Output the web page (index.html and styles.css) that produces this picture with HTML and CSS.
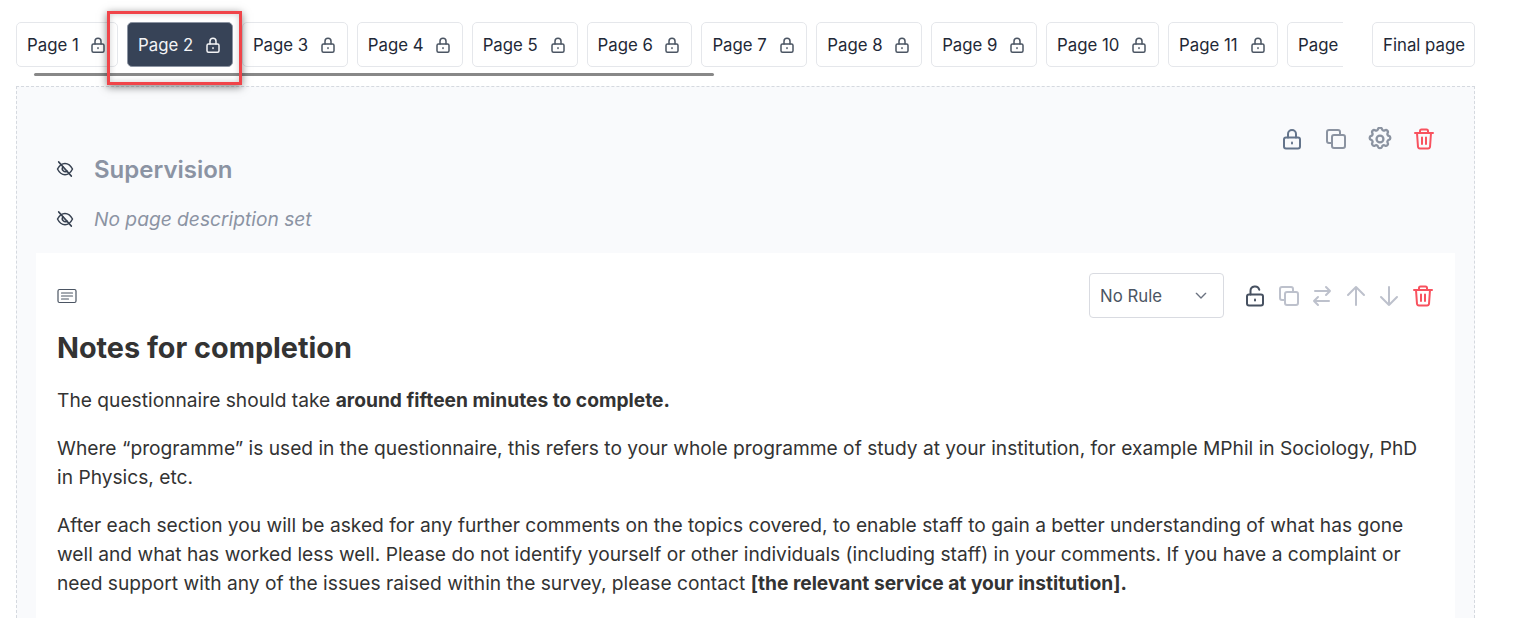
FILE: index.html
```html
<!DOCTYPE html>
<html>
<head>
    <title>Survey builder</title>
    <meta name="viewport" content="width=device-width,initial-scale=1.0">
    <link rel="stylesheet" href="styles.css">
</head>
<body>
    <svg class="defs" width="0" height="0">
        <symbol id="lock" viewBox="0 0 24 24"><path d="M8 10.500V7a4 4 0 0 1 8 0v3.500"/><rect x="4" y="10.500" width="16" height="11" rx="2"/><path d="M12 15.500v1"/></symbol>
        <symbol id="unlock" viewBox="0 0 24 24"><path d="M7.500 10.500V7a4.500 4.500 0 0 1 8.800-1.300"/><rect x="4" y="10.500" width="16" height="11" rx="2"/><path d="M12 15.500v1"/></symbol>
        <symbol id="copy" viewBox="0 0 24 24"><rect x="8" y="8" width="13" height="13" rx="2"/><path d="M16 8V5a2 2 0 0 0-2-2H5a2 2 0 0 0-2 2v9a2 2 0 0 0 2 2h3"/></symbol>
        <symbol id="trash" viewBox="0 0 24 24"><path d="M3 6h18M8 6V4a1.500 1.500 0 0 1 1.500-1.500h5A1.500 1.500 0 0 1 16 4v2M5 6l1 14a2 2 0 0 0 2 1.500h8a2 2 0 0 0 2-1.500l1-14M10 10.500v6.500M14 10.500v6.500"/></symbol>
        <symbol id="gear" viewBox="1.500 1.500 21 21"><path d="M10.300 3.300c.4-1.700 3-1.700 3.400 0a1.700 1.700 0 0 0 2.600 1.100c1.500-.9 3.300.8 2.400 2.400a1.700 1.700 0 0 0 1 2.500c1.800.5 1.800 3 0 3.500a1.700 1.700 0 0 0-1 2.500c.9 1.600-.9 3.300-2.400 2.400a1.700 1.700 0 0 0-2.600 1.100c-.4 1.700-3 1.700-3.400 0a1.700 1.700 0 0 0-2.600-1.100c-1.500.9-3.300-.8-2.400-2.400a1.700 1.700 0 0 0-1-2.500c-1.800-.5-1.800-3 0-3.500a1.700 1.700 0 0 0 1-2.500c-.9-1.600.9-3.300 2.400-2.400a1.700 1.700 0 0 0 2.600-1.100z"/><circle cx="12" cy="12" r="3"/></symbol>
        <symbol id="eyeoff" viewBox="0 0 24 24"><path d="M2 12c2.500-5 6-7.500 10-7.500s7.500 2.500 10 7.500c-2.500 5-6 7.500-10 7.500S4.500 17 2 12z"/><path d="M9.200 9.200a4 4 0 0 0 5.600 5.600"/><path d="M3.500 2.500l17 19"/></symbol>
    </svg>

    <div class="tabbar">
        <div class="tabscroll">
            <div class="tabs">
                <div class="tab">Page 1 <svg class="ico-s"><use href="#lock"/></svg></div>
                <div class="tab active">Page 2 <svg class="ico-s"><use href="#lock"/></svg></div>
                <div class="tab">Page 3 <svg class="ico-s"><use href="#lock"/></svg></div>
                <div class="tab">Page 4 <svg class="ico-s"><use href="#lock"/></svg></div>
                <div class="tab">Page 5 <svg class="ico-s"><use href="#lock"/></svg></div>
                <div class="tab">Page 6 <svg class="ico-s"><use href="#lock"/></svg></div>
                <div class="tab">Page 7 <svg class="ico-s"><use href="#lock"/></svg></div>
                <div class="tab">Page 8 <svg class="ico-s"><use href="#lock"/></svg></div>
                <div class="tab">Page 9 <svg class="ico-s"><use href="#lock"/></svg></div>
                <div class="tab">Page 10 <svg class="ico-s"><use href="#lock"/></svg></div>
                <div class="tab">Page 11 <svg class="ico-s"><use href="#lock"/></svg></div>
                <div class="tab">Page 12 <svg class="ico-s"><use href="#lock"/></svg></div>
            </div>
            <div class="thumb"></div>
        </div>
        <div class="tab final">Final page</div>
    </div>
    <div class="highlight"></div>

    <div class="page">
        <div class="page-tools">
            <svg class="ico slate"><use href="#lock"/></svg>
            <svg class="ico grey"><use href="#copy"/></svg>
            <svg class="ico grey"><use href="#gear"/></svg>
            <svg class="ico red"><use href="#trash"/></svg>
        </div>
        <div class="page-title"><svg class="ico-eye"><use href="#eyeoff"/></svg><span>Supervision</span></div>
        <div class="page-desc"><svg class="ico-eye"><use href="#eyeoff"/></svg><span>No page description set</span></div>

        <div class="card">
            <div class="card-head">
                <svg class="ico-text" viewBox="0 0 20 16"><rect x="1" y="1.500" width="18" height="13" rx="1.500"/><path d="M4.500 5h11M4.500 8h11M4.500 11h7"/></svg>
                <div class="card-tools">
                    <div class="rule">No Rule <svg class="chev" viewBox="0 0 24 24"><path d="M5 8l7 7 7-7"/></svg></div>
                    <div class="q-icons">
                        <svg class="ico dark"><use href="#unlock"/></svg>
                        <svg class="ico faint"><use href="#copy"/></svg>
                        <svg class="ico faint" viewBox="0 0 24 24"><path d="M20 7H5M16 3l4 4-4 4M4 17h15M8 13l-4 4 4 4"/></svg>
                        <svg class="ico faint" viewBox="0 0 24 24"><path d="M12 21V3M4 11l8-8 8 8"/></svg>
                        <svg class="ico faint" viewBox="0 0 24 24"><path d="M12 3v18M4 13l8 8 8-8"/></svg>
                        <svg class="ico red"><use href="#trash"/></svg>
                    </div>
                </div>
            </div>
            <h1>Notes for completion</h1>
            <p>The questionnaire should take <b>around fifteen minutes to complete.</b></p>
            <p>Where “programme” is used in the questionnaire, this refers to your whole programme of study at your institution, for example MPhil in Sociology, PhD in Physics, etc.</p>
            <p>After each section you will be asked for any further comments on the topics covered, to enable staff to gain a better understanding of what has gone well and what has worked less well. Please do not identify yourself or other individuals (including staff) in your comments. If you have a complaint or need support with any of the issues raised within the survey, please contact <b>[the relevant service at your institution].</b></p>
        </div>
    </div>
</body>
</html>
```

FILE: styles.css
```css
* { box-sizing: border-box; }
html, body { margin: 0; padding: 0; height: 618px; overflow: hidden; }
body { background: white; color: #333; font-family: 'Inter', sans-serif; font-size: 19.2px; }
.defs { display: block; height: 0; }
symbol, svg { fill: none; stroke: currentColor; stroke-width: 2; stroke-linecap: round; stroke-linejoin: round; }

.tabbar { display: flex; width: 1459px; margin: 22px 0 0 16px; justify-content: space-between; }
.tabscroll { width: 1327px; height: 54px; overflow: hidden; position: relative; }
.tabs { display: flex; gap: 9px; width: 1500px; }
.tab { display: flex; align-items: center; justify-content: space-between; flex: none; width: 105.875px; height: 45px; padding: 0 10px; background: white; border: 1px solid #e5e7eb; border-radius: 5px; color: #1f2937; font-size: 16.8px; white-space: nowrap; }
.tab:nth-child(1) { width: 102px; }
.tab:nth-child(10) { width: 113px; }
.tab:nth-child(11) { width: 110px; }
.tab.active { background: #374357; border-color: #8d95a3; color: #f3f4f6; }
.tab.final { width: 103px; }
.thumb { position: absolute; left: 18px; top: 51px; width: 680px; height: 3px; border-radius: 2px; background: #888; }
.highlight { position: absolute; left: 107px; top: 11px; width: 135px; height: 74px; border: 3px solid #f04449; box-shadow: 0 2px 8px rgba(0,0,0,0.5), inset 0 0 6px rgba(0,0,0,0.2); }
.ico-s { width: 18px; height: 18px; color: #4b5563; }
.active .ico-s { color: #f3f4f6; }

.page { width: 1459px; height: 532px; overflow: hidden; margin: 10px 0 0 16px; padding: 0 19px; background: #f9fafc; border: 1px dashed #d5d9df; border-bottom: 0; }
.page-tools { display: flex; gap: 20px; justify-content: flex-end; height: 24px; margin: 40px 19px 0 0; align-items: center; }
.ico { width: 24px; height: 24px; flex: none; }
.slate { color: #64748b; }
.grey { color: #8b93a1; }
.red { color: #f8525f; }
.dark { color: #475161; }
.faint { color: #bdc1cc; }

.page-title, .page-desc { display: flex; align-items: center; gap: 20px; padding-left: 20px; color: #8b93a3; }
.page-title { margin-top: 2px; height: 32px; font-size: 24px; font-weight: 600; }
.page-desc { margin-top: 21px; height: 26px; font-size: 19.2px; font-style: italic; }
.ico-eye { width: 18px; height: 18px; color: #374151; }

.card { background: white; margin-top: 21px; padding: 20px 20px 20px 21px; min-height: 420px; }
.card-head { display: flex; justify-content: space-between; align-items: center; height: 45px; }
.ico-text { width: 20px; height: 16px; stroke-width: 1.200; color: #4b5563; }
.card-tools { display: flex; align-items: center; gap: 19px; }
.rule { display: flex; align-items: center; justify-content: space-between; width: 135px; height: 45px; padding: 0 14px 0 10px; border: 1px solid #d9dbe1; border-radius: 4px; color: #4b5563; font-size: 16.8px; }
.chev { width: 16px; height: 16px; color: #6b7280; }
.q-icons { display: flex; gap: 9.600px; }

h1 { margin: 12px 0 0; padding-bottom: 1px; color: #333; font-size: 28.800px; line-height: 36px; font-weight: 700; }
p { margin: 19.200px 0 0; line-height: 28.800px; color: #333; }
p b { font-weight: 700; }
```
